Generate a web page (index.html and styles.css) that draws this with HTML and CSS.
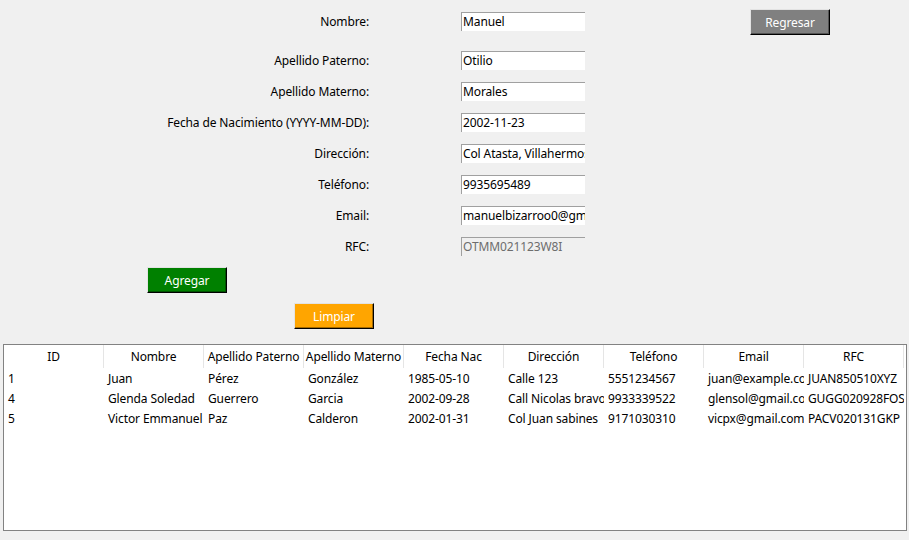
FILE: index.html
```html
<!DOCTYPE html>
<html lang="es">
<head>
<meta charset="utf-8">
<title>Registro</title>
<link rel="stylesheet" href="styles.css">
</head>
<body>
<div class="app">
  <div class="row row-first">
    <label class="lbl">Nombre:</label>
    <div class="entry">Manuel</div>
    <button class="btn btn-gray">Regresar</button>
  </div>
  <div class="fields">
    <div class="row"><label class="lbl">Apellido Paterno:</label><div class="entry">Otilio</div></div>
    <div class="row"><label class="lbl">Apellido Materno:</label><div class="entry">Morales</div></div>
    <div class="row"><label class="lbl">Fecha de Nacimiento (YYYY-MM-DD):</label><div class="entry">2002-11-23</div></div>
    <div class="row"><label class="lbl">Dirección:</label><div class="entry">Col Atasta, Villahermosa</div></div>
    <div class="row"><label class="lbl">Teléfono:</label><div class="entry">9935695489</div></div>
    <div class="row"><label class="lbl">Email:</label><div class="entry">manuelbizarroo0@gmail.com</div></div>
    <div class="row"><label class="lbl">RFC:</label><div class="entry entry-disabled">OTMM021123W8I</div></div>
  </div>
  <div class="btnrow btnrow-add"><button class="btn btn-green">Agregar</button></div>
  <div class="btnrow btnrow-clear"><button class="btn btn-orange">Limpiar</button></div>
  <div class="table">
    <div class="thead">
      <div class="th">ID</div><div class="th">Nombre</div><div class="th">Apellido Paterno</div><div class="th">Apellido Materno</div><div class="th">Fecha Nac</div><div class="th">Dirección</div><div class="th">Teléfono</div><div class="th">Email</div><div class="th">RFC</div>
    </div>
    <div class="tr">
      <div class="td">1</div><div class="td">Juan</div><div class="td">Pérez</div><div class="td">González</div><div class="td">1985-05-10</div><div class="td">Calle 123</div><div class="td">5551234567</div><div class="td">juan@example.com</div><div class="td">JUAN850510XYZ</div>
    </div>
    <div class="tr">
      <div class="td">4</div><div class="td">Glenda Soledad</div><div class="td">Guerrero</div><div class="td">Garcia</div><div class="td">2002-09-28</div><div class="td">Call Nicolas bravo</div><div class="td">9933339522</div><div class="td">glensol@gmail.com</div><div class="td">GUGG020928FOS</div>
    </div>
    <div class="tr">
      <div class="td">5</div><div class="td">Victor Emmanuel</div><div class="td">Paz</div><div class="td">Calderon</div><div class="td">2002-01-31</div><div class="td">Col Juan sabines</div><div class="td">9171030310</div><div class="td">vicpx@gmail.com</div><div class="td">PACV020131GKP</div>
    </div>
  </div>
</div>
</body>
</html>
```

FILE: styles.css
```css
* { box-sizing: border-box; }
html, body { margin: 0; padding: 0; }
body {
  background: #f0f0f0;
  font-family: "Noto Sans", "Open Sans", sans-serif;
  font-size: 12px;
  letter-spacing: -0.12px;
  color: #000;
  width: 909px;
  height: 540px;
  overflow: hidden;
}
.app { display: flex; flex-direction: column; }
.row {
  display: grid;
  grid-template-columns: 369px 92px 124px 165px 80px;
  align-items: center;
  height: 19px;
}
.row-first { height: 26px; margin-top: 9px; align-items: start; }
.row-first .lbl, .row-first .entry { margin-top: 3px; }
.lbl { grid-column: 1; text-align: right; white-space: nowrap; line-height: 19px; }
.entry {
  grid-column: 3;
  height: 19px;
  background: #fff;
  border-top: 1px solid #a0a0a0;
  border-left: 1px solid #a0a0a0;
  padding-left: 1px;
  line-height: 17px;
  white-space: nowrap;
  overflow: hidden;
}
.entry-disabled { background: #f0f0f0; color: #6d6d6d; }
.row-first .btn { grid-column: 5; }
.fields { display: flex; flex-direction: column; gap: 12px; margin-top: 16px; }
.btn {
  width: 80px;
  height: 26px;
  font-family: inherit;
  font-size: 12px;
  letter-spacing: -0.12px;
  color: #fff;
  padding: 0;
  border: 1px solid;
  border-color: #e3e3e3 #000 #000 #e3e3e3;
  box-shadow: inset -1px -1px 0 rgba(0,0,0,0.35);
  cursor: default;
}
.btn-gray { background: #808080; }
.btn-green { background: #008000; }
.btn-orange { background: #ffa500; }
.btnrow { display: flex; }
.btnrow-add { margin-top: 11px; padding-left: 147px; }
.btnrow-clear { margin-top: 10px; padding-left: 294px; }
.table {
  margin-top: 15px;
  margin-left: 3px;
  width: 904px;
  height: 187px;
  background: #fff;
  border: 1px solid #828282;
}
.thead, .tr { display: flex; }
.thead { height: 24px; }
.th {
  width: 100px;
  flex: none;
  text-align: center;
  line-height: 23px;
  height: 23px;
  border-right: 1px solid #e5e5e5;
  white-space: nowrap;
  overflow: hidden;
}
.tr { height: 20px; }
.td {
  width: 100px;
  flex: none;
  padding-left: 4px;
  padding-right: 1px;
  line-height: 20px;
  white-space: nowrap;
  overflow: hidden;
}
```
